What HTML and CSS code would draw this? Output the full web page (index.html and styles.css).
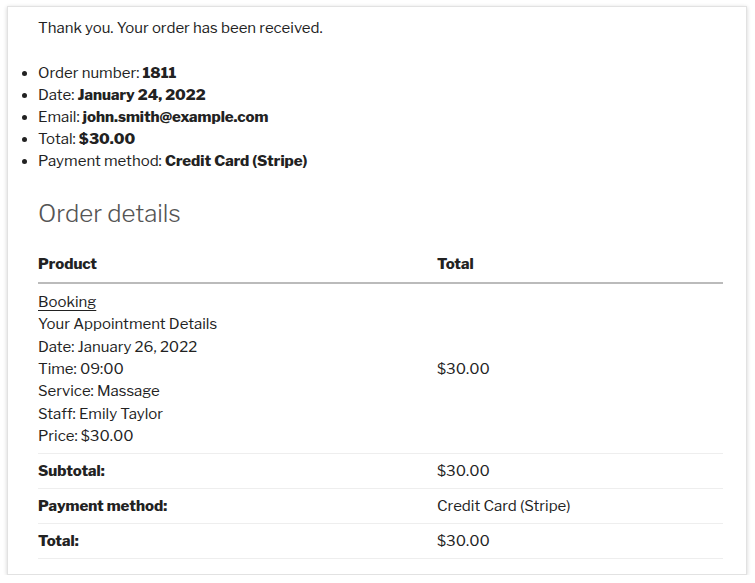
FILE: index.html
```html
<!DOCTYPE html>
<html>
<head>
<meta charset="utf-8">
<link rel="stylesheet" href="styles.css">
</head>
<body>
<div class="card">
  <p class="thanks">Thank you. Your order has been received.</p>
  <ul class="overview">
    <li>Order number: <strong>1811</strong></li>
    <li>Date: <strong>January 24, 2022</strong></li>
    <li>Email: <strong>john.smith@example.com</strong></li>
    <li>Total: <strong>$30.00</strong></li>
    <li>Payment method: <strong>Credit Card (Stripe)</strong></li>
  </ul>
  <h2 class="title">Order details</h2>
  <table class="details">
    <thead>
      <tr><th class="col1">Product</th><th>Total</th></tr>
    </thead>
    <tbody>
      <tr class="item">
        <td><a href="#">Booking</a><br>Your Appointment Details<br>Date: January 26, 2022<br>Time: 09:00<br>Service: Massage<br>Staff: Emily Taylor<br>Price: $30.00</td>
        <td>$30.00</td>
      </tr>
    </tbody>
    <tfoot>
      <tr><th>Subtotal:</th><td>$30.00</td></tr>
      <tr><th>Payment method:</th><td>Credit Card (Stripe)</td></tr>
      <tr><th>Total:</th><td>$30.00</td></tr>
    </tfoot>
  </table>
</div>
</body>
</html>
```

FILE: styles.css
```css
html, body {
  margin: 0;
  padding: 0;
  background: #fff;
}
body {
  font-family: "Libre Franklin", "Roboto", "Liberation Sans", sans-serif;
  font-size: 15px;
  color: #222;
  line-height: 22px;
}
.card {
  margin: 6px 0 0 7px;
  width: 740px;
  height: 569px;
  border: 1px solid #e2e2e2;
  box-shadow: 0 1px 4px rgba(0,0,0,0.18);
  padding: 2px 24px 0 30px;
  box-sizing: border-box;
}
.thanks {
  margin: 8px 0 0 0;
}
.overview {
  margin: 23px 0 0 0;
  padding: 0;
  list-style: none;
}
.overview li {
  position: relative;
}
.overview li::before {
  content: "";
  position: absolute;
  left: -16px;
  top: 9px;
  width: 5px;
  height: 5px;
  border-radius: 50%;
  background: #222;
}
.overview strong {
  font-weight: 800;
}
.title {
  margin: 27px 0 0 0;
  font-size: 24px;
  font-weight: 300;
  color: #555;
  line-height: 30px;
}
.details {
  margin-top: 24px;
  width: 685px;
  border-collapse: collapse;
}
.details th, .details td {
  text-align: left;
  vertical-align: middle;
  padding: 0;
}
.details th {
  font-weight: 800;
}
.details .col1 {
  width: 399px;
}
.details thead th {
  padding: 0 0 7px 0;
  border-bottom: 2px solid #bbb;
}
.details tbody td {
  padding: 7px 0 6px 0;
  border-bottom: 1px solid #eee;
  line-height: 22.33px;
}
.details tbody a {
  color: #222;
  text-decoration: underline;
  text-underline-offset: 3px;
}
.details tfoot th, .details tfoot td {
  padding: 6px 0 6px 0;
  border-bottom: 1px solid #eee;
  line-height: 22px;
}
```
